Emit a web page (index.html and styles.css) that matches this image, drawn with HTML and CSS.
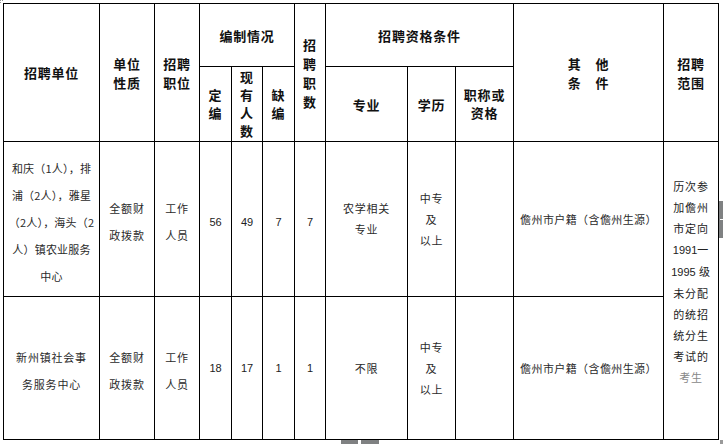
FILE: index.html
```html
<!DOCTYPE html>
<html lang="zh">
<head>
<meta charset="utf-8">
<link rel="stylesheet" href="styles.css">
</head>
<body>
<div class="page">
  <table class="grid">
    <colgroup>
      <col class="c1"><col class="c2"><col class="c3"><col class="c4"><col class="c5"><col class="c6"><col class="c7"><col class="c8"><col class="c9"><col class="c10"><col class="c11"><col class="c12">
    </colgroup>
    <tr class="h1">
      <th rowspan="2">招聘单位</th>
      <th rowspan="2" class="tall">单位<br>性质</th>
      <th rowspan="2" class="tall">招聘<br>职位</th>
      <th colspan="3">编制情况</th>
      <th rowspan="2" class="tall">招<br>聘<br>职<br>数</th>
      <th colspan="3">招聘资格条件</th>
      <th rowspan="2" class="tall">其　他<br>条　件</th>
      <th rowspan="2" class="tall">招聘<br>范围</th>
    </tr>
    <tr class="h2">
      <th class="sub">定<br>编</th>
      <th class="sub">现<br>有<br>人<br>数</th>
      <th class="sub">缺<br>编</th>
      <th>专业</th>
      <th>学历</th>
      <th class="sub">职称或<br>资格</th>
    </tr>
    <tr class="r1">
      <td class="wide lo unit">和庆（1人），排<br>浦（2人），雅星<br>（2人），海头（2<br>人）镇农业服务<br>中心</td>
      <td class="wide lo">全额财<br>政拨款</td>
      <td class="wide lo">工作<br>人员</td>
      <td class="num lo">56</td>
      <td class="num lo">49</td>
      <td class="num lo">7</td>
      <td class="num lo">7</td>
      <td>农学相关<br>专业</td>
      <td>中专<br>及<br>以上</td>
      <td></td>
      <td class="cond">儋州市户籍（含儋州生源）</td>
      <td rowspan="2" class="scope">历次参<br>加儋州<br>市定向<br><span class="n">1991</span>一<br><span class="n">1995</span> 级<br>未分配<br>的统招<br>统分生<br>考试的<br><span class="faint">考生</span></td>
    </tr>
    <tr class="r2">
      <td class="wide lo">新州镇社会事<br>务服务中心</td>
      <td class="wide lo">全额财<br>政拨款</td>
      <td class="wide lo">工作<br>人员</td>
      <td class="num">18</td>
      <td class="num">17</td>
      <td class="num">1</td>
      <td class="num">1</td>
      <td>不限</td>
      <td>中专<br>及<br>以上</td>
      <td></td>
      <td class="cond">儋州市户籍（含儋州生源）</td>
    </tr>
  </table>
  <div class="mark-tl"></div>
  <div class="tab tab-a"></div>
  <div class="tab tab-b"></div>
  <div class="side"><span class="notch"></span></div>
  <div class="corner"></div>
</div>
</body>
</html>
```
FILE: styles.css
```css
html, body {
  margin: 0;
  padding: 0;
  background: #ffffff;
}
body {
  font-family: "Noto Sans CJK SC", "Noto Sans", sans-serif;
  color: #000;
  width: 723px;
  height: 444px;
  overflow: hidden;
}
.page {
  position: relative;
  width: 723px;
  height: 444px;
  padding: 3px 0 0 3px;
  box-sizing: border-box;
}
.grid {
  border-collapse: collapse;
  table-layout: fixed;
  width: 716px;
}
.c1 { width: 96px; }
.c2 { width: 55px; }
.c3 { width: 45px; }
.c4 { width: 32px; }
.c5 { width: 31px; }
.c6 { width: 32px; }
.c7 { width: 31px; }
.c8 { width: 82px; }
.c9 { width: 48px; }
.c10 { width: 58px; }
.c11 { width: 150px; }
.c12 { width: 55px; }

.grid th, .grid td {
  border: 1px solid #000;
  padding: 0;
  text-align: center;
  vertical-align: middle;
}
.grid th {
  font-size: 13px;
  font-weight: 700;
  line-height: 19px;
  letter-spacing: 0.8px;
  color: #111;
}
.grid th.sub {
  line-height: 18px;
}
.h1 { height: 63px; }
.h2 { height: 75px; }
.r1 { height: 155px; }
.r2 { height: 143px; }

.grid td {
  font-size: 11px;
  line-height: 21px;
  letter-spacing: 0.8px;
  color: #2a2a2a;
  white-space: nowrap;
}
.grid td.wide {
  line-height: 27px;
}
.grid td.unit {
  letter-spacing: 0.2px;
}
.grid td.lo {
  padding-top: 6px;
}
.grid td.num {
  font-family: "Liberation Sans", Arial, sans-serif;
  font-size: 11px;
  letter-spacing: 0;
  color: #222;
}
.grid td.cond {
  letter-spacing: 0.4px;
}
.grid td.scope {
  padding-bottom: 18px;
  line-height: 21px;
  font-size: 11px;
  color: #222;
}
.scope .n {
  font-family: "Liberation Sans", Arial, sans-serif;
  letter-spacing: 0;
}
.scope .faint {
  color: #888;
}

.mark-tl {
  position: absolute;
  left: 0;
  top: 0;
  width: 2px;
  height: 2px;
  border-left: 1px dotted #999;
  border-top: 1px dotted #999;
}
.tab {
  position: absolute;
  top: 440px;
  height: 4px;
  background: #7f8182;
}
.tab-a { left: 341px; width: 17px; }
.tab-b { left: 361px; width: 18px; }
.side {
  position: absolute;
  left: 719px;
  top: 201px;
  width: 4px;
  height: 37px;
  background: #7f8182;
}
.notch {
  position: absolute;
  left: 1px;
  top: 18px;
  width: 3px;
  height: 1px;
  background: #fff;
}
.corner {
  position: absolute;
  left: 720px;
  top: 440px;
  width: 3px;
  height: 4px;
  background: #9a9a9a;
}
```
